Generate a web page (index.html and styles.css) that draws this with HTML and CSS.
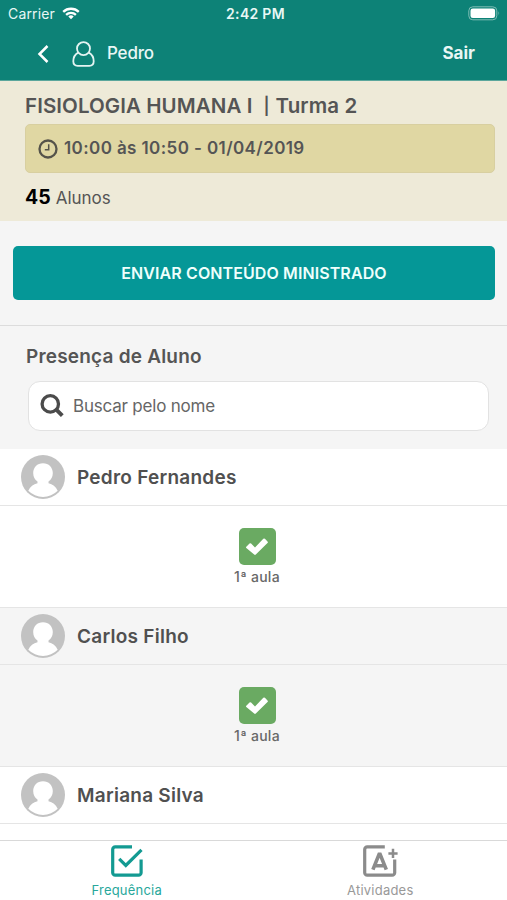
FILE: index.html
```html
<!DOCTYPE html>
<html lang="pt-BR">
<head>
<meta charset="utf-8">
<title>Frequência</title>
<link rel="stylesheet" href="styles.css">
</head>
<body>
<svg class="defs" width="0" height="0" aria-hidden="true">
  <symbol id="avatar" viewBox="0 0 44 44">
    <circle cx="22" cy="22" r="22" fill="#c2c2c2"/>
    <path d="M22 8.200c-5.800 0-9.800 4.200-9.800 9.800 0 3.900 1.600 6.800 4.300 8.600v1.600C12.500 29 9 31.800 7.300 35.800A20.800 20.800 0 0 0 36.700 35.800C35 31.800 31.500 29 27.500 28.200v-1.600c2.700-1.800 4.300-4.700 4.300-8.600 0-5.600-4-9.800-9.800-9.800z" fill="#fff"/>
  </symbol>
  <symbol id="check" viewBox="0 0 37 37">
    <rect width="37" height="37" rx="5" fill="#6aaa62"/>
    <path d="M7.300 18.800l3.200-3.200q.8-.8 1.600 0l3.900 3.900 8.300-8.700q.8-.8 1.600 0l2.600 2.600q.8.800 0 1.600L16.800 26.500q-.8.800-1.600 0L7.300 20.100q-.6-.6 0-1.300z" fill="#fff"/>
  </symbol>
</svg>
<div class="app">
  <header class="header">
    <div class="status">
      <div class="carrier"><span class="carrier-name">Carrier</span>
        <svg width="18" height="13" viewBox="0 0 18 13" fill="none" stroke="#fff" stroke-width="2.300"><path d="M1.200 4.900a11.200 11.200 0 0 1 15.600 0M4.100 7.900a7 7 0 0 1 9.800 0"/><path d="M9 12.300L6.300 9.600a3.900 3.900 0 0 1 5.400 0z" fill="#fff" stroke="none"/></svg>
      </div>
      <span class="clock">2:42 PM</span>
      <svg class="battery" width="33" height="15" viewBox="0 0 33 15"><rect x=".8" y=".8" width="28" height="13" rx="4" fill="none" stroke="#7fbdb6"/><rect x="2.500" y="2.500" width="24.600" height="9.600" rx="2.300" fill="#fff"/><path d="M30.500 5.200q1.700 2.200 0 4.400z" fill="#7fbdb6"/></svg>
    </div>
    <nav class="nav">
      <svg width="12" height="18" viewBox="0 0 12 18" fill="none" stroke="#fff" stroke-width="2.500"><path d="M10.500 1L2.500 9l8 8"/></svg>
      <svg class="user-icon" width="23" height="26" viewBox="0 0 23 26" fill="none" stroke="#e4f4f2" stroke-width="1.800"><circle cx="11.500" cy="7.600" r="6.500"/><path d="M6.200 11.600C3 13.300 1.300 16.500 1.300 20.300c0 3 1.400 4.500 4.400 4.500h11.600c3 0 4.400-1.500 4.400-4.500 0-3.800-1.700-7-4.900-8.700"/></svg>
      <span class="user-name">Pedro</span>
      <span class="logout">Sair</span>
    </nav>
  </header>
  <section class="info">
    <h1 class="course"><span class="course-name">FISIOLOGIA HUMANA I</span><span class="bar">|</span><span class="group">Turma 2</span></h1>
    <div class="time">
      <svg width="20" height="20" viewBox="0 0 20 20" fill="none" stroke="#55534a"><circle cx="10" cy="10" r="8.500" stroke-width="2.300"/><path d="M10.700 5.200v5.600H6.800" stroke-width="1.500"/></svg>
      <span class="time-text">10:00 às 10:50 - 01/04/2019</span>
    </div>
    <p class="count"><b class="count-number">45</b><span class="count-label">Alunos</span></p>
  </section>
  <section class="action"><button class="send"><span class="send-text">ENVIAR CONTEÚDO MINISTRADO</span></button></section>
  <section class="presence">
    <h2 class="title"><span class="title-text">Presença de Aluno</span></h2>
    <div class="search">
      <svg width="24" height="24" viewBox="0 0 24 24" fill="none" stroke="#4b4b4b"><circle cx="10.300" cy="9.900" r="8.200" stroke-width="3.300"/><path d="M15.800 15.200l6.500 6.500" stroke-width="4"/></svg>
      <span class="search-text">Buscar pelo nome</span>
    </div>
  </section>
  <main class="list">
    <article class="student">
      <div class="head"><svg class="avatar"><use href="#avatar"/></svg><span class="name">Pedro Fernandes</span></div>
      <div class="body"><svg class="check"><use href="#check"/></svg><span class="lesson">1ª aula</span></div>
    </article>
    <article class="student alt">
      <div class="head"><svg class="avatar"><use href="#avatar"/></svg><span class="name">Carlos Filho</span></div>
      <div class="body"><svg class="check"><use href="#check"/></svg><span class="lesson">1ª aula</span></div>
    </article>
    <article class="student">
      <div class="head"><svg class="avatar"><use href="#avatar"/></svg><span class="name">Mariana Silva</span></div>
    </article>
  </main>
  <footer class="tabs">
    <div class="tab active">
      <svg width="32" height="32" viewBox="0 0 32 32" fill="none" stroke="#139a92" stroke-width="3.200"><path d="M21 1.900H4.200a2.500 2.500 0 0 0-2.500 2.500v23.300a2.500 2.500 0 0 0 2.500 2.500h23.400a2.500 2.500 0 0 0 2.500-2.500V14.500"/><path d="M8.200 13.800l6.600 6.600L30.500 4.800"/></svg>
      <span class="tab-label">Frequência</span>
    </div>
    <div class="tab">
      <svg width="35" height="32" viewBox="0 0 35 32" fill="none" stroke="#8b8b8b" stroke-width="3.200"><path d="M21.800 1.900H4.200a2.500 2.500 0 0 0-2.500 2.500v23.300a2.500 2.500 0 0 0 2.500 2.500h25a2.500 2.500 0 0 0 2.500-2.500V14.500"/><path d="M30 3.800v9.200M25.400 8.400h9.200" stroke-width="2.500"/><path d="M9.900 24.700L16.100 9.300h1l6.200 15.400M12.200 20.700h8.800" stroke-width="3.600"/></svg>
      <span class="tab-label">Atividades</span>
    </div>
  </footer>
</div>
</body>
</html>
```
FILE: styles.css
```css
* { box-sizing: border-box; }
body { margin: 0; font-family: Inter, "Liberation Sans", sans-serif; color: #555; background: #f5f5f5; }
.defs { display: block; height: 0; }
.app { width: 507px; height: 900px; display: flex; flex-direction: column; overflow: hidden; }
svg { flex: none; display: block; }
span, b { white-space: nowrap; }

.header { flex: none; height: 81px; background: #0d8277; color: #e8f7f5; border-bottom: 1px solid #5ba79c; }
.status { height: 27px; display: grid; grid-template-columns: 1fr auto 1fr; align-items: center; padding: 0 5px 0 8px; }
.carrier { display: flex; align-items: center; gap: 7px; font-size: 14px; letter-spacing: .15px; }
.clock { padding-left: 1px; font-size: 14px; font-weight: 600; letter-spacing: .3px; }
.battery { justify-self: end; margin-right: 1px; }
.nav { height: 53px; display: flex; align-items: center; padding: 0 32px 0 37px; }
.user-icon { margin-left: 23px; }
.user-name { margin-left: 12px; padding-bottom: 2px; font-size: 17px; font-weight: 500; letter-spacing: -.2px; }
.logout { margin-left: auto; padding-bottom: 2px; font-size: 17px; font-weight: 700; }

.info { flex: none; height: 140px; padding: 12px 12px 0 25px; background: #eeead8; }
.course { margin: 0; height: 26px; line-height: 26px; display: flex; font-size: 20.5px; font-weight: 600; letter-spacing: .08px; }
.bar { margin: 0 6px 0 11px; font-size: 17px; }
.time { margin-top: 5px; height: 49px; display: flex; align-items: center; gap: 6px; padding-left: 12px; background: #e0d7a3; border: 1px solid #d8cfa0; border-radius: 5px; font-size: 17px; font-weight: 600; }
.time-text { padding-bottom: 2px; letter-spacing: .4px; }
.count { margin: 11px 0 0; height: 26px; display: flex; align-items: baseline; gap: 5px; line-height: 26px; }
.count-number { color: #000; font-size: 19.5px; font-weight: 700; }
.count-label { font-size: 17px; }

.action { flex: none; height: 105px; padding: 25px 12px 0 13px; border-bottom: 1px solid #dcdcdc; }
.send { width: 100%; height: 54px; border: 0; padding: 0; border-radius: 5px; background: #059797; color: #effffc; font: 600 16px Inter, sans-serif; letter-spacing: .1px; }

.presence { flex: none; height: 123px; padding: 18px 18px 0 28px; }
.title { margin: 0 0 11px -2px; height: 26px; line-height: 26px; font-size: 19px; font-weight: 600; letter-spacing: .2px; }
.search { height: 50px; display: flex; align-items: center; gap: 9px; padding-left: 11px; background: #fff; border: 1px solid #e2e2e2; border-radius: 12px; font-size: 17px; letter-spacing: -.2px; color: #666; }

.list { flex: none; height: 391px; background: #fff; overflow: hidden; }
.student { background: #fff; }
.alt { background: #f5f5f5; }
.head { height: 57px; display: flex; align-items: center; gap: 12px; padding-left: 21px; border-bottom: 1px solid #e5e5e5; font-size: 19px; font-weight: 600; letter-spacing: .25px; color: #505050; }
.avatar { width: 44px; height: 44px; }
.body { height: 102px; display: flex; flex-direction: column; align-items: center; gap: 2px; padding: 22px 0 0 7px; border-bottom: 1px solid #e5e5e5; font-size: 14px; font-weight: 500; letter-spacing: .28px; color: #686868; }
.check { width: 37px; height: 37px; }
.lesson { line-height: 20px; }

.tabs { flex: none; height: 60px; display: grid; grid-template-columns: 1fr 1fr; background: #fff; border-top: 1px solid #d9d9d9; }
.tab { display: flex; flex-direction: column; align-items: center; gap: 4px; padding-top: 4px; font-size: 13px; letter-spacing: .22px; color: #999; }
.active { color: #28a79b; }
.tab-label { line-height: 18px; }
```
